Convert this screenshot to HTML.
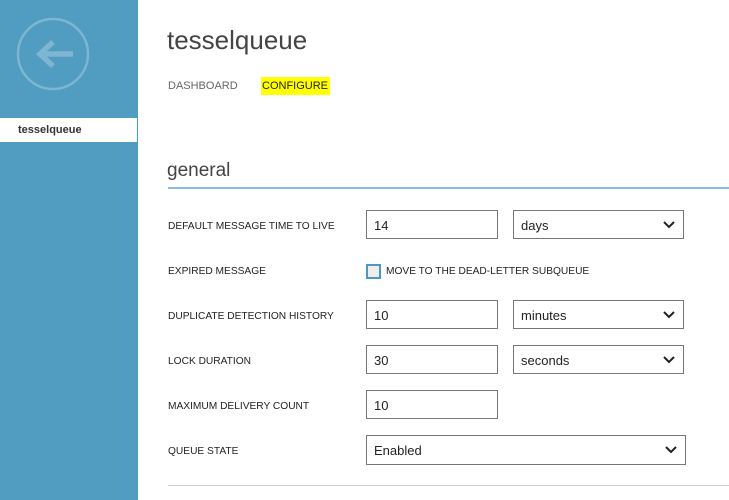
<!DOCTYPE html>
<html><head><style>
body{margin:0;width:729px;height:500px;overflow:hidden;background:#fff;font-family:"Liberation Sans",sans-serif;position:relative;color:#333}
.side{position:absolute;left:0;top:0;width:138px;height:500px;background:#519cc1}
.sel{position:absolute;left:0;top:118px;width:137px;height:24px;background:#fff;font-size:11px;font-weight:bold;color:#333;line-height:24px;text-indent:18px}
.a{position:absolute}
.lbl{position:absolute;left:168px;font-size:10.2px;color:#222}
.in{position:absolute;border:1px solid #777;box-sizing:border-box;height:29px;font-size:13px;line-height:29px;padding-left:7px;color:#222}
.chev{position:absolute;right:8px;top:10px}
</style></head><body>
<div class="side">
<svg class="a" style="left:16px;top:17px" width="76" height="76" viewBox="0 0 76 76"><circle cx="37" cy="37" r="35" fill="none" stroke="#7db5d2" stroke-width="2.5"/><path d="M57 37H24M37 25L24 37L37 49" fill="none" stroke="#7db5d2" stroke-width="5.5"/></svg>
<div class="sel">tesselqueue</div>
</div>
<div class="a" style="left:167px;top:25px;font-size:26px;color:#444">tesselqueue</div>
<div class="a" style="left:168px;top:80px;font-size:11px;color:#666">DASHBOARD</div>
<div class="a" style="left:261px;top:77px;font-size:11px;color:#222;background:#ffff00;padding:3px 2px 3px 1px">CONFIGURE</div>
<div class="a" style="left:167px;top:160px;font-size:19px;color:#444">general</div>
<div class="a" style="left:168px;top:187px;width:561px;height:2px;background:#8cb9e2"></div>
<div class="lbl" style="top:221px">DEFAULT MESSAGE TIME TO LIVE</div>
<div class="in" style="left:366px;top:210px;width:132px">14</div>
<div class="in" style="left:513px;top:210px;width:171px">days<svg class="chev" width="12" height="8"><path d="M1 1L6 6L11 1" fill="none" stroke="#222" stroke-width="2"/></svg></div>
<div class="lbl" style="top:266px">EXPIRED MESSAGE</div>
<div class="a" style="left:366px;top:264px;width:15px;height:15px;box-sizing:border-box;border:2px solid #4a97c8;background:#eee"></div>
<div class="a" style="left:386px;top:266px;font-size:10.2px;color:#222">MOVE TO THE DEAD-LETTER SUBQUEUE</div>
<div class="lbl" style="top:311px">DUPLICATE DETECTION HISTORY</div>
<div class="in" style="left:366px;top:300px;width:132px">10</div>
<div class="in" style="left:513px;top:300px;width:171px">minutes<svg class="chev" width="12" height="8"><path d="M1 1L6 6L11 1" fill="none" stroke="#222" stroke-width="2"/></svg></div>
<div class="lbl" style="top:356px">LOCK DURATION</div>
<div class="in" style="left:366px;top:345px;width:132px">30</div>
<div class="in" style="left:513px;top:345px;width:171px">seconds<svg class="chev" width="12" height="8"><path d="M1 1L6 6L11 1" fill="none" stroke="#222" stroke-width="2"/></svg></div>
<div class="lbl" style="top:401px">MAXIMUM DELIVERY COUNT</div>
<div class="in" style="left:366px;top:390px;width:132px">10</div>
<div class="lbl" style="top:446px">QUEUE STATE</div>
<div class="in" style="left:366px;top:435px;width:320px;height:30px">Enabled<svg class="chev" width="12" height="8"><path d="M1 1L6 6L11 1" fill="none" stroke="#222" stroke-width="2"/></svg></div>
<div class="a" style="left:168px;top:485px;width:561px;height:1px;background:#ccc"></div>
</body></html>
